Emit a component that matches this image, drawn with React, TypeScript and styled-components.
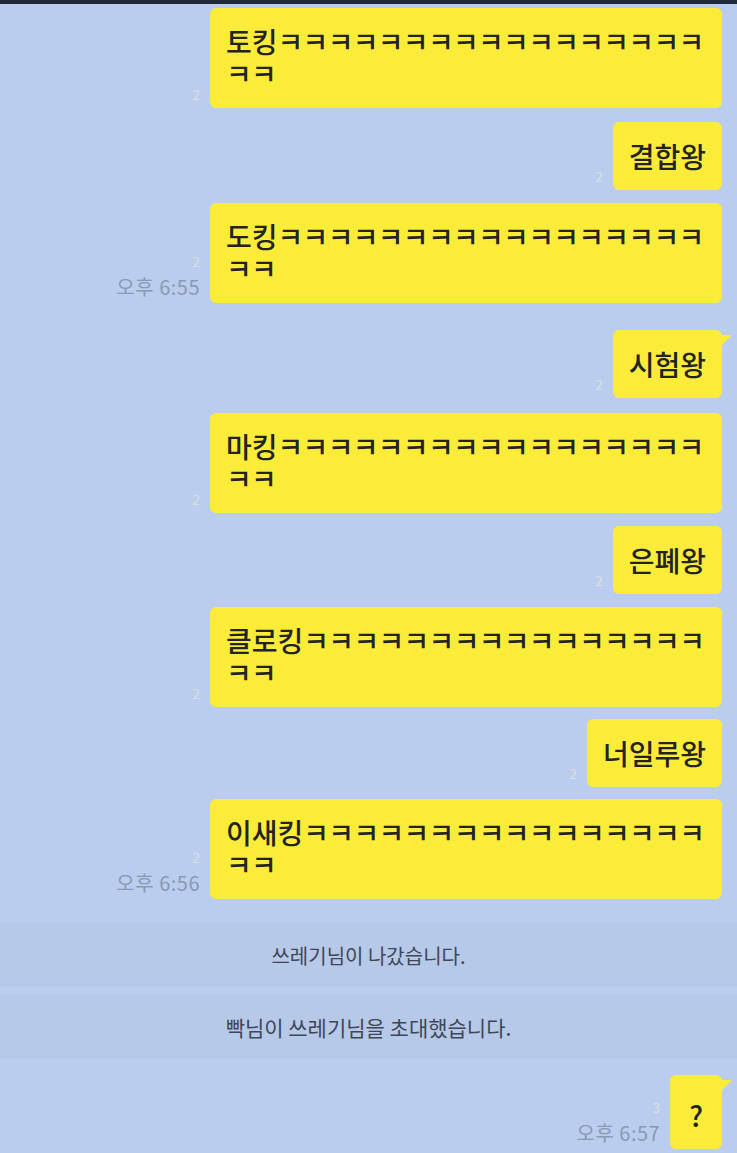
import styled, { createGlobalStyle, css } from 'styled-components'

const GlobalStyle = createGlobalStyle`
  html, body {
    margin: 0;
    padding: 0;
    background: #bacdee;
  }
  body {
    font-family: "Noto Sans CJK KR", "Noto Sans", sans-serif;
  }
`

const Screen = styled.div`
  width: 737px;
  height: 1153px;
  overflow: hidden;
  background: #bacdee;
  display: flex;
  flex-direction: column;
`

const TopEdge = styled.div`
  height: 4px;
  flex-shrink: 0;
  background: #1f2a38;
`

const Feed = styled.div`
  display: flex;
  flex-direction: column;
  padding-top: 4px;
`

const Row = styled.div<{ $top: number }>`
  display: flex;
  justify-content: flex-end;
  align-items: flex-end;
  gap: 10px;
  padding-right: 15px;
  margin-top: ${p => p.$top}px;
`

const Meta = styled.div`
  display: flex;
  flex-direction: column;
  align-items: flex-end;
  gap: 5px;
  padding-bottom: 5px;
`

const Unread = styled.span`
  font-size: 14px;
  line-height: 17px;
  color: #d9e0dc;
`

const Time = styled.span`
  font-size: 20px;
  line-height: 23px;
  letter-spacing: 0.5px;
  color: #889ab4;
`

const Bubble = styled.div<{ $wide?: boolean; $tail?: boolean }>`
  position: relative;
  box-sizing: border-box;
  background: #fbec3a;
  border-radius: 6px;
  padding: 18px 16px;
  font-size: 28px;
  font-weight: 500;
  line-height: 32px;
  color: #232323;
  white-space: nowrap;
  ${p => p.$wide && css`
    width: 512px;
    padding-top: 17px;
    padding-bottom: 19px;
  `}
  ${p => p.$tail && css`
    &::after {
      content: '';
      position: absolute;
      right: -10px;
      top: 5px;
      width: 12px;
      height: 12px;
      background: #fbec3a;
      clip-path: polygon(0 0, 100% 0, 0 100%);
    }
  `}
`

const Laugh = styled.span`
  letter-spacing: -0.7px;
`

const Ask = styled(Bubble)`
  padding: 24px 19px 18px;
`

const Notice = styled.div<{ $top: number; $size: number }>`
  margin-top: ${p => p.$top}px;
  height: 64px;
  display: flex;
  align-items: center;
  justify-content: center;
  background: rgba(110, 130, 165, 0.05);
  font-size: ${p => p.$size}px;
  color: #3f4756;
`

type Msg = {
  text: string
  top: number
  wide?: boolean
  tail?: boolean
  time?: string
}

const laugh = (head: string, n: number) => (
  <>
    {head}
    <Laugh>{'ㅋ'.repeat(n)}</Laugh>
    <br />
    <Laugh>ㅋㅋ</Laugh>
  </>
)

const messages: Msg[] = [
  { text: '토킹', top: 0, wide: true },
  { text: '결합왕', top: 14 },
  { text: '도킹', top: 13, wide: true, time: '오후 6:55' },
  { text: '시험왕', top: 27, tail: true },
  { text: '마킹', top: 15, wide: true },
  { text: '은폐왕', top: 13 },
  { text: '클로킹', top: 13, wide: true },
  { text: '너일루왕', top: 12 },
  { text: '이새킹', top: 12, wide: true, time: '오후 6:56' },
]

const App = () => {
  return (
    <Screen>
      <GlobalStyle />
      <TopEdge />
      <Feed>
        {messages.map(m => (
          <Row $top={m.top} key={m.text}>
            <Meta>
              <Unread>2</Unread>
              {m.time && <Time>{m.time}</Time>}
            </Meta>
            <Bubble $wide={m.wide} $tail={m.tail}>
              {m.wide ? laugh(m.text, 19 - m.text.length) : m.text}
            </Bubble>
          </Row>
        ))}
        <Notice $top={24} $size={20}>쓰레기님이 나갔습니다.</Notice>
        <Notice $top={8} $size={21}>빡님이 쓰레기님을 초대했습니다.</Notice>
        <Row $top={16}>
          <Meta>
            <Unread>3</Unread>
            <Time>오후 6:57</Time>
          </Meta>
          <Ask $tail>?</Ask>
        </Row>
      </Feed>
    </Screen>
  )
}

export default App
